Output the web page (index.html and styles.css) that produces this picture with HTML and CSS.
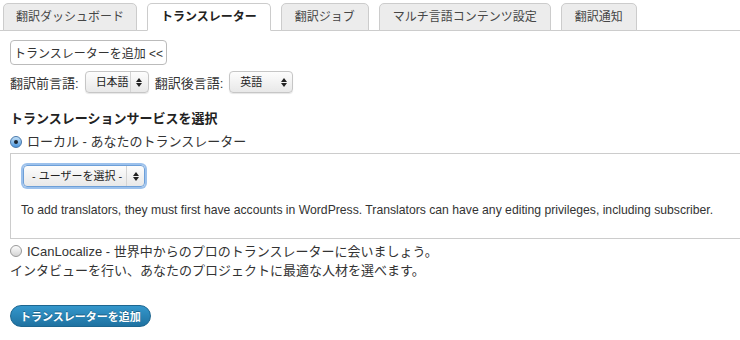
FILE: index.html
```html
<!DOCTYPE html>
<html lang="ja">
<head>
  <meta charset="UTF-8" />
  <title>トランスレーター</title>
  <link rel="stylesheet" href="styles.css">
</head>
<body>
  <nav class="tabs">
    <a class="tab" href="#">翻訳ダッシュボード</a>
    <a class="tab active" href="#">トランスレーター</a>
    <a class="tab" href="#">翻訳ジョブ</a>
    <a class="tab" href="#">マルチ言語コンテンツ設定</a>
    <a class="tab" href="#">翻訳通知</a>
  </nav>

  <div class="content">
    <button class="add-toggle">トランスレーターを追加 &lt;&lt;</button>

    <div class="lang-row">
      <span>翻訳前言語:</span>
      <span class="select split">
        <span class="select-value">日本語</span>
        <span class="select-arrows"><svg width="6" height="9" viewBox="0 0 6 9"><polygon points="0,4 3,0 6,4" /><polygon points="0,5 3,9 6,5" /></svg></span>
      </span>
      <span>翻訳後言語:</span>
      <span class="select">
        <span class="select-value">英語</span>
        <span class="select-arrows"><svg width="6" height="9" viewBox="0 0 6 9"><polygon points="0,4 3,0 6,4" /><polygon points="0,5 3,9 6,5" /></svg></span>
      </span>
    </div>

    <h3 class="service-title">トランスレーションサービスを選択</h3>
    <div class="radio-row"><span class="radio checked"></span>ローカル - あなたのトランスレーター</div>

    <div class="local-box">
      <span class="select split focus">
        <span class="select-value">- ユーザーを選択 -</span>
        <span class="select-arrows"><svg width="6" height="9" viewBox="0 0 6 9"><polygon points="0,4 3,0 6,4" /><polygon points="0,5 3,9 6,5" /></svg></span>
      </span>
      <p class="note">To add translators, they must first have accounts in WordPress. Translators can have any editing privileges, including subscriber.</p>
    </div>

    <p class="icl"><span class="radio"></span>ICanLocalize - 世界中からのプロのトランスレーターに会いましょう。<br>インタビューを行い、あなたのプロジェクトに最適な人材を選べます。</p>

    <button class="primary">トランスレーターを追加</button>
  </div>
</body>
</html>
```

FILE: styles.css
```css
body {
  margin: 0;
  font-family: 'Liberation Sans', 'Noto Sans CJK JP', sans-serif;
  font-size: 13px;
  color: #333;
  background: #fff;
  overflow: hidden;
}

.tabs {
  display: flex;
  gap: 10px;
  padding: 3px 0 0 3px;
  border-bottom: 1px solid #ccc;
}
.tab {
  height: 28px;
  box-sizing: border-box;
  margin-bottom: -1px;
  padding: 0 13px;
  line-height: 26px;
  font-size: 12px;
  color: #464646;
  background: #ececec;
  border: 1px solid #ccc;
  border-radius: 5px 5px 0 0;
  text-decoration: none;
}
.tab:first-child { padding: 0 12px; }
.tab.active {
  background: #fff;
  border-bottom-color: #fff;
  font-weight: bold;
  color: #222;
}

.content {
  padding: 9px 10px 0;
}

.add-toggle {
  display: block;
  height: 25px;
  padding: 0 3px;
  font-family: inherit;
  font-size: 12px;
  color: #333;
  background: #fff;
  border: 1px solid #bbb;
  border-radius: 4px;
}

.lang-row {
  display: flex;
  align-items: center;
  gap: 6px;
  height: 22px;
  margin-top: 6px;
}

.select {
  display: inline-flex;
  width: 64px;
  height: 22px;
  box-sizing: border-box;
  border: 1px solid #c6c6c6;
  border-radius: 4px;
  background: linear-gradient(#fdfdfd, #e8e8e8);
  box-shadow: 0 1px 1px rgba(0, 0, 0, 0.1);
  font-size: 11px;
  color: #222;
}
.select-value {
  flex: 1;
  padding-left: 10px;
  line-height: 20px;
  white-space: nowrap;
}
.select-arrows {
  width: 17px;
  display: flex;
  align-items: center;
  justify-content: center;
}
.select-arrows svg { fill: #222; }
.select.split .select-arrows { border-left: 1px solid #d4d4d4; }
.select.focus {
  width: 122px;
  margin-left: 2px;
  border-color: #6d9fd8;
  box-shadow: 0 0 0 2px #9cc1ec;
}
.select.focus .select-value { padding-left: 8px; }

.service-title {
  margin: 17px 0 0;
  font-size: 13px;
  line-height: 18px;
  font-weight: bold;
  color: #222;
}

.radio-row {
  display: flex;
  align-items: center;
  gap: 5px;
  margin-top: 5px;
  line-height: 18px;
}

.radio {
  display: inline-block;
  position: relative;
  width: 12px;
  height: 12px;
  box-sizing: border-box;
  border-radius: 50%;
  border: 1px solid #999;
  background: linear-gradient(#fdfdfd, #d4d4d4);
}
.radio.checked {
  border-color: #4878ab;
  background: linear-gradient(#c3e1f8, #4d96dc);
}
.radio.checked::after {
  content: '';
  position: absolute;
  left: 3px;
  top: 3px;
  width: 4px;
  height: 4px;
  border-radius: 50%;
  background: #1c2733;
}

.local-box {
  margin: 2px -20px 0 0;
  padding: 11px 10px 20px;
  border: 1px solid #ccc;
}
.note {
  margin: 15px 0 0;
  font-size: 12.2px;
  line-height: 16px;
  color: #333;
}

.icl {
  margin: 3px 0 0;
  line-height: 19px;
}
.icl .radio {
  margin-right: 5px;
  vertical-align: -1px;
}

.primary {
  display: block;
  margin-top: 25px;
  height: 22px;
  padding: 0 9px;
  font-family: inherit;
  font-size: 11px;
  font-weight: bold;
  color: #fff;
  background: linear-gradient(#3497cc, #1f72a1);
  border: 1px solid #1d6690;
  border-radius: 11px;
  text-shadow: 0 -1px 0 rgba(0, 0, 0, 0.3);
}
```
